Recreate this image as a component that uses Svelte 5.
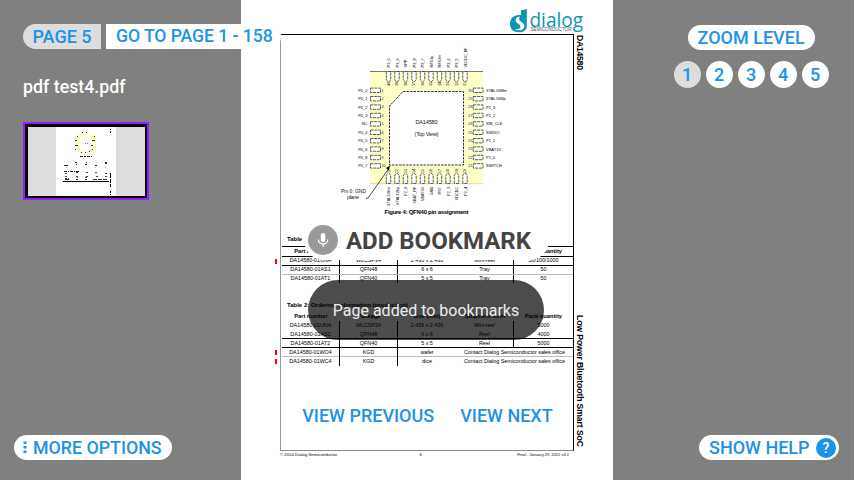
<script>
  const pins = Array.from({ length: 10 }, (_, i) => i);
  const left = ['P0_0', 'P0_1', 'P0_2', 'P0_3', 'NC', 'P0_4', 'P0_5', 'P0_6', 'P0_8', 'P0_7'];
  const right = ['XTAL16Mm', 'XTAL16Mp', 'P1_3', 'P1_2', 'SW_CLK', 'SWDIO', 'P1_1', 'VBAT1V', 'P1_0', 'SWITCH'];
  const top = ['P3_0', 'P2_9', 'VPP', 'P2_8', 'P2_7', 'RFIOp', 'RFIOm', 'P2_6', 'P2_5', 'VDCDC_RF'];
  const bottom = ['XTAL32Km', 'XTAL32Kp', 'P2_0', 'VBAT_RF', 'VBAT3V', 'GND', 'RST', 'P2_3', 'VDCDC', 'P2_4'];
  const trays = [
    ['DA14580-01UNA', 'WLCSP34', '2.436 x 2.436', 'Mini-reel', '50/100/1000'],
    ['DA14580-01AS1', 'QFN48', '6 x 6', 'Tray', '50'],
    ['DA14580-01AT1', 'QFN40', '5 x 5', 'Tray', '50']
  ];
  const production = [
    ['DA14580-01UNA', 'WLCSP34', '2.436 x 2.436', 'Mini-reel', '5000'],
    ['DA14580-01AS2', 'QFN48', '6 x 6', 'Reel', '4000'],
    ['DA14580-01AT2', 'QFN40', '5 x 5', 'Reel', '5000'],
    ['DA14580-01WO4', 'KGD', 'wafer', 'Contact Dialog Semiconductor sales office'],
    ['DA14580-01WC4', 'KGD', 'dice', 'Contact Dialog Semiconductor sales office']
  ];
  const levels = [1, 2, 3, 4, 5];
</script>

{#snippet cells(row)}
  {#each row as cell, i}
    <span class:rule={i < 2 || (i === 3 && row.length === 5)} class:wide={i === 3 && row.length === 4}>{cell}</span>
  {/each}
{/snippet}

<div class="viewer">
  <aside class="side left">
    <div class="pages">
      <button class="current">PAGE 5</button>
      <button class="goto">GO TO PAGE 1 - 158</button>
    </div>
    <div class="filename">pdf test4.pdf</div>
    <div class="thumb">
      <svg width="117" height="69" viewBox="0 0 117 69" shape-rendering="crispEdges">
        <rect width="117" height="69" fill="#ddd" />
        <rect x="28" width="60" height="69" fill="#fff" />
        <rect x="50.5" y="8.500" width="16" height="16" fill="none" stroke="#ffffc4" stroke-width="3" />
        <path d="M54 5.5h1m3 0h1m-10 4h1m-3 4h2m-2 5h3m-3 4h1m5 3h1m3 0h1m3-1h1m4-15h1m-3 4h3m-4 5h2m-1 4h1" stroke="#333" />
        <path d="M57 16.500h3" stroke="#777" stroke-dasharray="1 1" />
        <path d="M52 29.500h12" stroke="#111" stroke-dasharray="3 1 2 1" />
        <path d="M47 35.500h2m9 0h1m18 0h2M36 38.500h4m8-1h1m8 0h2m8 1h2m8-2h2" stroke="#222" />
        <path d="M38 40.500h1m9 0h1m18 0h1m9 0h1" stroke="#aaa" />
        <path d="M36 44.500h16" stroke="#111" stroke-dasharray="3 1 1 1" />
        <path d="M37 46.500h3m8-1h2m8 0h2m7 0h3m7 1h3M37 49.500h3m8 0h2m8 0h2m8 0h2m7 0h3M37 51.500h4m8-1h1m7 0h2" stroke="#444" stroke-dasharray="2 1" />
        <path d="M65 52.500h14M37 52.500h5m6 0h2m7 0h2" stroke="#333" stroke-dasharray="4 1" />
        <path d="M35 54.500h46M82.500 2v1m0 1v2m0 40v5m0 1v4m0 1v3m0 4v2m0 1v1" stroke="#000" />
      </svg>
    </div>
    <button class="more">
      <svg width="4" height="13" viewBox="0 0 4 13"><path d="M.5.5h3v2.500h-3zM.5 5h3v2.500h-3zM.5 9.500h3v2.500h-3z" fill="#1c92e8" /></svg>
      MORE OPTIONS
    </button>
  </aside>

  <main class="page">
    <header>
      <svg width="76" height="24" viewBox="0 0 76 24">
        <path d="M12 0.500l5.800-1.500v17c0 4-3.300 6.300-7.600 6.300C4.500 22.300 1 18.800 1 13.800 1 8 5.500 4 12 5.200z" fill="#0a94b6" />
        <path d="M11.500 6.500C7.500 6.500 5.500 9.600 7.200 12c1.500 2 4.400 2.300 4.200 4.800-.2 2-2.400 3-6 2.300 4.500 2.500 10 1.200 10-3 0-3.600-5.300-4.300-5.300-7 0-1.300.6-2 1.400-2.600z" fill="#fff" />
        <text x="20.500" y="16.500" font-family="Open Sans" font-size="20" textLength="53.500" lengthAdjust="spacingAndGlyphs" fill="#0a94b6">dialog</text>
        <text x="21.500" y="21" font-size="4.600" textLength="41" lengthAdjust="spacingAndGlyphs" fill="#555">SEMICONDUCTOR</text>
      </svg>
    </header>

    <div class="body">
      <section class="sheet">
        <svg class="chip" width="290" height="184" viewBox="283 35 290 184">
          <rect x="370" y="71" width="113" height="113" fill="#ffffc8" />
          <path d="M370 71.500h113" stroke="#555" stroke-width=".8" />
          <path d="M370 183.700h113" stroke="#bbb" stroke-width=".6" />
          <path d="M403 91.500h60.500V165H389.500V106z" fill="#fff" stroke="#222" stroke-dasharray="2.500 1" stroke-width=".9" />
          <g fill="#fff" stroke="#333" stroke-dasharray="3 .8" stroke-width=".8">
            {#each pins as i}
              <rect x="370.500" y={88.100 + i * 8.400} width="10" height="4.400" />
              <rect x="473.300" y={88.100 + i * 8.400} width="9.700" height="4.400" />
              <path d="M{386.300 + i * 8.500} 71.500v8.500l2.200 2 2.200-2v-8.500z" />
              <path d="M{386.300 + i * 8.500} 183.500v-8.500l2.200-2 2.200 2v8.500z" />
            {/each}
          </g>
          <g font-size="4" fill="#000">
            {#each pins as i}
              <text x="367.500" y={91.700 + i * 8.400} text-anchor="end">{left[i]}</text>
              <text x="486" y={91.700 + i * 8.400}>{right[i]}</text>
              <text transform="translate({390 + i * 8.500} 67.500) rotate(-90)" font-size={i === 9 ? 3.700 : 4}>{top[i]}</text>
              <text transform="translate({390 + i * 8.500} 186.800) rotate(-90)" font-size="3.800" text-anchor="end">{bottom[i]}</text>
            {/each}
          </g>
          <g font-size="3.800" fill="#222">
            {#each pins as i}
              <text x="381.500" y={91.600 + i * 8.400}>{i + 1}</text>
              <text x="472.500" y={91.600 + i * 8.400} text-anchor="end">{30 - i}</text>
              <text transform="translate({389.800 + i * 8.500} 86) rotate(-90)">{40 - i}</text>
              <text transform="translate({389.800 + i * 8.500} 173) rotate(-90)">{11 + i}</text>
            {/each}
          </g>
          <g font-size="5.500" fill="#111" text-anchor="middle">
            <text x="426.500" y="124.300" textLength="22">DA14580</text>
            <text x="426.500" y="135.700" textLength="24">(Top View)</text>
            <text x="353.500" y="193.300" textLength="25" lengthAdjust="spacingAndGlyphs">Pin 0: GND</text>
            <text x="353" y="199.300" textLength="12">plane</text>
            <text x="426.500" y="214" font-size="6" font-weight="bold" fill="#000" textLength="84">Figure 4: QFN40 pin assignment</text>
          </g>
          <path d="M366 198.500l2-.5 20.500-29" fill="none" stroke="#222" stroke-width=".8" />
          <path d="M390 165.500l-1 5-3-2.500z" />
        </svg>

        <div class="title first">Table 1:</div>
        <div class="grid head lined"><span>Part number</span><span></span><span></span><span></span><span>Pack quantity</span></div>
        {#each trays as row, i}
          <div class="grid tray" class:marked={i === 0} class:dark={i === 0} class:soft={i === 1}>{@render cells(row)}</div>
        {/each}

        <div class="title second">Table 2: Ordering information (production)</div>
        <div class="grid head"><span>Part number</span><span>Package</span><span>Size (mm)</span><span>Shipment form</span><span>Pack quantity</span></div>
        {#each production as row, i}
          <div class="grid" class:marked={i > 2} class:dark={i === 1 || i === 2} class:soft={i === 3}>{@render cells(row)}</div>
        {/each}
      </section>
      <div class="spine">
        <svg width="14" height="416" viewBox="0 0 14 416" font-weight="bold">
          <text transform="translate(3 1) rotate(90)" font-size="8.700" textLength="35">DA14580</text>
          <text transform="translate(3 281) rotate(90)" font-size="8.700" textLength="132">Low Power Bluetooth Smart SoC</text>
        </svg>
      </div>
    </div>
    <footer><span>© 2014 Dialog Semiconductor</span><span>6</span><span>Final - January 29, 2015 v3.1</span></footer>

    <div class="add">
      <svg width="30" height="30" viewBox="0 0 30 30">
        <circle cx="15" cy="15" r="15" fill="#999" />
        <rect x="12.800" y="8" width="4.600" height="9" rx="2.300" fill="#fff" />
        <path d="M10.400 14.500c0 6 9.400 6 9.400 0M15.100 19v3" fill="none" stroke="#fff" stroke-width="1.300" />
      </svg>
      <span>ADD BOOKMARK</span>
    </div>
    <div class="toast">Page added to bookmarks</div>
    <nav><button>VIEW PREVIOUS</button><button>VIEW NEXT</button></nav>
  </main>

  <aside class="side right">
    <div class="zoom">
      <div class="label">ZOOM LEVEL</div>
      <div class="levels">
        {#each levels as n}<button class:active={n === 1}>{n}</button>{/each}
      </div>
    </div>
    <button class="help">SHOW HELP <i>?</i></button>
  </aside>
</div>

<style>
  :global(body) { margin: 0; overflow: hidden; }
  .viewer {
    display: grid; grid-template-columns: 240.600px 372px 1fr;
    width: 854px; height: 480px; background: #808080;
    font: 500 18px/25px Roboto, sans-serif;
  }
  button { border: 0; padding: 0; margin: 0; font: inherit; color: #1c92e8; background: #fff; white-space: nowrap; }
  .side { box-sizing: border-box; display: flex; flex-direction: column; height: 480px; min-width: 0; }
  .left { padding: 24px 0 20px 23px; align-items: flex-start; position: relative; z-index: 2; }
  .pages { display: flex; gap: 5px; }
  .pages button { height: 25px; }
  .current { width: 78px; border-radius: 13px 0 0 13px; background: #ddd; }
  .goto { width: 175px; border-radius: 0 13px 13px 0; padding-left: 10px; box-sizing: border-box; text-align: left; font-size: 17.600px; letter-spacing: -.05px; }
  .filename { color: #fff; margin-top: 25px; height: 25px; font-size: 17.800px; }
  .thumb { margin-top: 23px; border: 2px solid #8f22fa; }
  .thumb svg { display: block; border: 3px solid #000; border-right-width: 2px; border-bottom-width: 2px; }
  .more { margin: auto 0 0 -9px; width: 158px; height: 25px; border-radius: 13px; display: flex; align-items: center; padding: 0 0 0 9px; gap: 6px; box-sizing: border-box; font-size: 17.800px; }

  .page { position: relative; box-sizing: border-box; height: 480px; background: #fff; font-family: "Liberation Sans", Arial, sans-serif; font-weight: 400; overflow: hidden; }
  header { height: 34px; padding: 10px 0 0 268.400px; box-sizing: border-box; }
  header svg { display: block; overflow: visible; }
  .body { display: flex; height: 417px; padding-left: 39.400px; }
  .sheet { box-sizing: border-box; width: 294px; height: 417px; border: 1px solid #000; border-left-color: #999; border-bottom-color: #888; padding-left: 1px; }
  .chip { display: block; margin-left: 1px; width: 290px; }
  .chip text, .spine text { font-family: "Liberation Sans", Arial, sans-serif; }
  .spine svg { display: block; }
  .title { font-size: 6px; line-height: 8px; font-weight: bold; padding-left: 5px; white-space: nowrap; }
  .first { margin-top: 16px; height: 11px; }
  .second { margin-top: 18px; height: 11px; }
  .grid { position: relative; display: grid; grid-template-columns: 58px 58px 58px 58px 59px; width: 291px; height: 8.800px; font-size: 5.400px; line-height: 9px; text-align: center; white-space: nowrap; color: #000; box-sizing: border-box; border-bottom: 0 solid #000; }
  .tray { line-height: 7.400px; }
  .head { font-weight: bold; font-size: 5.700px; height: 9px; }
  .lined { border-top: 1px solid #000; border-bottom: 1px solid #000; height: 11px; }
  .dark { border-bottom: 1px solid #000; }
  .soft { border-bottom: 1px solid #bbb; }
  .rule { border-right: 1px solid #000; }
  .wide { grid-column: 4 / 6; }
  .marked::before { content: ''; position: absolute; left: -7px; top: 2px; width: 2px; height: 5px; background: #f00; }
  footer { display: grid; grid-template-columns: 1fr 10px 1fr; width: 289px; margin-left: 39.400px; font-size: 4.300px; line-height: 8px; color: #000; }
  footer span:last-child { text-align: right; font-size: 4px; }

  .add { position: absolute; left: 63px; top: 220px; width: 245px; height: 40px; border-radius: 20px; background: #fff; display: flex; align-items: center; gap: 8px; padding-left: 4.400px; box-sizing: border-box; font: 700 24px/40px Roboto, sans-serif; color: #444; white-space: nowrap; }
  .add span { padding-top: 1px; }
  .toast { position: absolute; left: 67.400px; top: 280px; width: 236px; height: 60px; border-radius: 30px; background: rgba(0, 0, 0, .7); color: #eee; text-align: center; font: 400 16px/62px Roboto, sans-serif; }
  nav { position: absolute; left: 61.600px; top: 403px; display: flex; gap: 26px; font: 500 18px/25px Roboto, sans-serif; }
  nav button { background: transparent; }

  .right { padding: 25px 15px 20px 61px; }
  .zoom { display: flex; flex-direction: column; align-items: flex-start; gap: 11px; }
  .label { margin-left: 14px; width: 127px; height: 25px; border-radius: 13px; background: #fff; color: #1c92e8; text-align: center; }
  .levels { display: flex; gap: 5px; }
  .levels button { width: 27px; height: 27px; border-radius: 50%; }
  .levels .active { background: #ddd; }
  .help { margin: auto 0 0 auto; width: 140px; height: 25px; border-radius: 13px; display: flex; align-items: center; justify-content: space-between; padding: 0 3px 0 10px; box-sizing: border-box; }
  i { width: 20px; height: 20px; border-radius: 50%; background: #1c92e8; color: #fff; font: 500 14px/20px Roboto, sans-serif; text-align: center; }
</style>
